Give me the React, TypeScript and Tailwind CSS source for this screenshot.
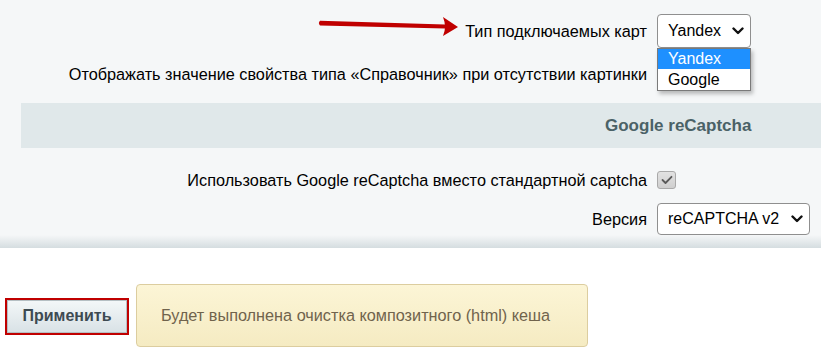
import React from "react";

const FONT = { fontFamily: '"Liberation Sans", Arial, sans-serif' };

function Chevron() {
  return (
    <svg width="12" height="8" viewBox="0 0 12 8" className="shrink-0">
      <path d="M1.5 1.5 L6 6 L10.5 1.5" fill="none" stroke="#111" strokeWidth="2.4" strokeLinecap="round" strokeLinejoin="round" />
    </svg>
  );
}

function FakeSelect({ value, width, height, children }: { value: string; width: string; height: string; children?: React.ReactNode }) {
  return (
    <div className={`relative ${width} ${height}`}>
      <div className="flex h-full items-center justify-between rounded-[4px] border border-[#8f8f8f] bg-white pl-[10px] pr-[6px] text-[16px] text-black">
        <span>{value}</span>
        <Chevron />
      </div>
      {children}
    </div>
  );
}

export default function App() {
  return (
    <div className="w-[821px] h-[358px] overflow-hidden bg-white" style={FONT}>
      {/* Settings panel */}
      <div className="relative bg-[#f5f7f8] pt-[14px] text-[16.25px] text-black">
        {/* red arrow pointing at the label */}
        <svg className="absolute left-[316px] top-[14px]" width="146" height="26" viewBox="0 0 146 26">
          <path d="M4 6.8 L129 10.4 L129 14.6 L4 11.4 Q1.8 9.1 4 6.8 Z" fill="#c00000" />
          <path d="M127 3 L142 13 L127 22 Q131 13 127 3 Z" fill="#c00000" />
        </svg>

        <div className="grid grid-cols-[647px_1fr] gap-x-[10px] items-center h-[34px]">
          <div className="text-right">Тип подключаемых карт</div>
          <FakeSelect value="Yandex" width="w-[94px]" height="h-[34px]">
            <div className="absolute left-0 top-[34px] z-10 w-[94px] border border-[#7a7a7a] bg-white text-[16px] shadow-[2px_3px_4px_rgba(0,0,0,0.25)]">
              <div className="h-[20px] leading-[20px] bg-[#1e90ff] pl-[10px] text-white">Yandex</div>
              <div className="h-[21px] leading-[21px] pl-[10px] text-black">Google</div>
            </div>
          </FakeSelect>
        </div>

        <div className="grid grid-cols-[647px_1fr] gap-x-[10px] items-center h-[20px] mt-[14px]">
          <div className="text-right">Отображать значение свойства типа «Справочник» при отсутствии картинки</div>
          <div />
        </div>

        <div className="mt-[21px] ml-[21px] h-[45px] bg-[#e0e8ea] flex items-center pl-[584px] text-[17px] font-bold text-[#4b6267]">
          Google reCaptcha
        </div>

        <div className="grid grid-cols-[647px_1fr] gap-x-[10px] items-center h-[18px] mt-[20px]">
          <div className="text-right">Использовать Google reCaptcha вместо стандартной captcha</div>
          <div className="flex h-[18px] w-[19px] items-center justify-center rounded-[3px] border border-[#a9a9a9] bg-gradient-to-b from-[#e2e2e2] to-[#cfcfcf]">
            <svg width="12" height="10" viewBox="0 0 12 10">
              <path d="M1.5 5 L4.5 8 L10.5 1.8" fill="none" stroke="#5a5a5a" strokeWidth="1.8" strokeLinecap="round" strokeLinejoin="round" />
            </svg>
          </div>
        </div>

        <div className="grid grid-cols-[647px_1fr] gap-x-[10px] items-center h-[32px] mt-[17px]">
          <div className="text-right">Версия</div>
          <FakeSelect value="reCAPTCHA v2" width="w-[153px]" height="h-[32px]" />
        </div>

        <div className="h-[13px] bg-gradient-to-b from-[#f5f7f8] to-[#d5dde0]" />
      </div>

      {/* Footer buttons */}
      <div className="flex items-center pt-[36px] pl-[5px]">
        <div className="mt-[1px] border-2 border-[#c00000] p-0">
          <button className="h-[33px] w-[120px] border border-[#b5bfc3] bg-gradient-to-b from-[#f3f7f8] to-[#d9e2e6] text-[16px] font-bold text-[#3d4a52]">
            Применить
          </button>
        </div>
        <div className="ml-[7px] flex h-[63px] w-[452px] items-center rounded-[4px] border border-[#dccd9f] bg-gradient-to-b from-[#fcf5d6] to-[#f5ebc2] pl-[24px] text-[16.25px] text-[#70634c]">
          Будет выполнена очистка композитного (html) кеша
        </div>
      </div>
    </div>
  );
}
